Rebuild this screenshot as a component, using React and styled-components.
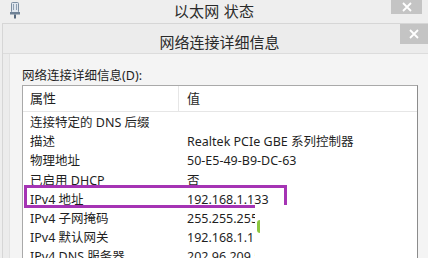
import React from "react";
import styled, { createGlobalStyle } from "styled-components";

const GlobalStyle = createGlobalStyle`
	body {
		margin: 0;
		background: #eeeeee;
		font-family: "Noto Sans", "Noto Sans CJK SC", sans-serif;
		color: #1f1f1f;
	}
`;

const rows = [
	{ name: "连接特定的 DNS 后缀", value: "" },
	{ name: "描述", value: "Realtek PCIe GBE 系列控制器" },
	{ name: "物理地址", value: "50-E5-49-B9-DC-63" },
	{ name: "已启用 DHCP", value: "否" },
	{ name: "IPv4 地址", value: "192.168.1.133", marked: true },
	{ name: "IPv4 子网掩码", value: "255.255.255.0" },
	{ name: "IPv4 默认网关", value: "192.168.1.1" },
	{ name: "IPv4 DNS 服务器", value: "202.96.209.5" },
];

const CloseIcon = () => (
	<svg width="10" height="10" viewBox="0 0 10 10">
		<path d="M1 1 L9 9 M9 1 L1 9" stroke="#fff" strokeWidth="1.8" />
	</svg>
);

const AdapterIcon = () => (
	<svg width="12" height="17" viewBox="0 0 12 17">
		<rect x="2.5" y="0.5" width="7" height="10" rx="1" fill="#dfe6ee" stroke="#7d8fa3" />
		<path d="M4.5 2 V8 M7.5 2 V8" stroke="#8fa0b2" />
		<rect x="1" y="10" width="10" height="2.5" fill="#6f8296" />
		<path d="M6 12.5 V16.5" stroke="#56687c" strokeWidth="2" />
	</svg>
);

const App = () => {
	return (
		<Screen>
			<GlobalStyle />
			<TitleBar>
				<IconSlot>
					<AdapterIcon />
				</IconSlot>
				<Title>以太网 状态</Title>
				<CloseSlot>
					<CloseButton $w={31} $h={14} $gap={6}>
						<CloseIcon />
					</CloseButton>
				</CloseSlot>
			</TitleBar>
			<Dialog>
				<DialogTitleBar>
					<span />
					<DialogTitle>网络连接详细信息</DialogTitle>
					<CloseSlot>
						<CloseButton $w={28} $h={20} $gap={0}>
							<CloseIcon />
						</CloseButton>
					</CloseSlot>
				</DialogTitleBar>
				<Panel>
					<Label>网络连接详细信息(D):</Label>
					<ListBox>
						<HeaderRow>
							<HeaderCell>属性</HeaderCell>
							<HeaderCell $value>值</HeaderCell>
						</HeaderRow>
						{rows.map((row) => (
							<Row key={row.name}>
								<Cell>{row.name}</Cell>
								<Cell $value>{row.value}</Cell>
								{row.marked && <Marker />}
							</Row>
						))}
						<Blank>
							<GreenMark />
						</Blank>
					</ListBox>
				</Panel>
			</Dialog>
		</Screen>
	);
};

export default App;

const Screen = styled.div`
	width: 428px;
	height: 258px;
	overflow: hidden;
	background: #eeeeee;
`;

const TitleBar = styled.div`
	height: 23px;
	display: grid;
	grid-template-columns: 1fr auto 1fr;
	align-items: start;
`;

const IconSlot = styled.div`
	padding: 2px 0 0 9px;
`;

const Title = styled.div`
	font-size: 15px;
	line-height: 20px;
	color: #2a2a2a;
	padding-top: 1px;
	letter-spacing: 0.3px;
`;

const CloseSlot = styled.div`
	display: flex;
	justify-content: flex-end;
`;

const CloseButton = styled.div`
	width: ${(p) => p.$w}px;
	height: ${(p) => p.$h}px;
	background: #c4c4c4;
	display: flex;
	align-items: center;
	justify-content: center;
	margin-right: ${(p) => p.$gap}px;
`;

const Dialog = styled.div`
	margin-left: 2px;
	border-top: 1px solid #d6d6d6;
	border-left: 1px solid #d6d6d6;
	background: #ececec;
	height: 240px;
`;

const DialogTitleBar = styled.div`
	height: 29px;
	display: grid;
	grid-template-columns: 1fr auto 1fr;
	align-items: start;
	border-bottom: 1px solid #dcdcdc;
`;

const DialogTitle = styled.div`
	font-size: 15px;
	line-height: 20px;
	padding-top: 8px;
	padding-left: 8px;
	color: #2a2a2a;
`;

const Panel = styled.div`
	margin-left: 6px;
	border-left: 1px solid #e2e2e2;
	background: #f4f4f4;
	height: 210px;
	padding: 14px 10px 0 12px;
`;

const Label = styled.div`
	font-size: 12.5px;
	line-height: 16px;
	height: 17px;
`;

const ListBox = styled.div`
	position: relative;
	width: 394px;
	height: 200px;
	background: #ffffff;
	border: 1px solid #a9a9a9;
	border-right-color: #8c8c8c;
`;

const HeaderRow = styled.div`
	display: grid;
	grid-template-columns: 155px 1fr;
	height: 25px;
	border-bottom: 1px solid #e6e6e6;
	margin-bottom: 1px;
`;

const HeaderCell = styled.div`
	font-size: 13px;
	line-height: 25px;
	padding-left: ${(p) => (p.$value ? 8 : 7)}px;
	border-left: ${(p) => (p.$value ? "1px solid #e6e6e6" : "none")};
`;

const Row = styled.div`
	position: relative;
	display: grid;
	grid-template-columns: 155px 1fr;
	height: 19.2px;
	align-items: center;
`;

const Cell = styled.div`
	font-size: 12.5px;
	line-height: 19px;
	white-space: nowrap;
	padding-left: ${(p) => (p.$value ? 9 : 7)}px;
`;

const Marker = styled.div`
	position: absolute;
	left: 1px;
	top: -5px;
	width: 257px;
	height: 17px;
	border: 3px solid #a534b4;
	pointer-events: none;
`;

const Blank = styled.div`
	position: absolute;
	left: 232px;
	top: 119px;
	right: 0;
	bottom: 0;
	background: #ffffff;
`;

const GreenMark = styled.div`
	position: absolute;
	left: 2px;
	top: 15px;
	width: 3px;
	height: 13px;
	border-radius: 3px 0 0 3px;
	background: #8cc63e;
`;
